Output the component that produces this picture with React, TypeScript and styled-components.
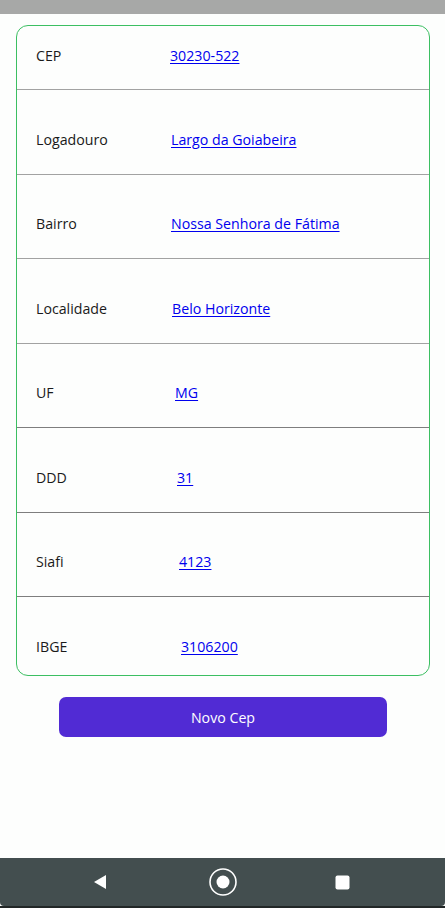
import React from "react";
import styled, { createGlobalStyle } from "styled-components";

const Global = createGlobalStyle`
  html, body { margin: 0; padding: 0; background: #fdfefd; }
  body { font-family: "Open Sans", "Noto Sans", sans-serif; }
`;

const Screen = styled.div`
  width: 445px;
  height: 908px;
  display: flex;
  flex-direction: column;
  background: #fdfefd;
  overflow: hidden;
`;

const StatusBar = styled.div`
  height: 14px;
  background: #a7a8a7;
  flex-shrink: 0;
`;

const Content = styled.div`
  flex: 1;
  display: flex;
  flex-direction: column;
  padding: 11px 15px 0 16px;
`;

const Card = styled.div`
  border: 1px solid #3cbf62;
  border-radius: 12px;
  display: flex;
  flex-direction: column;
  overflow: hidden;
`;

const Row = styled.div<{ $first?: boolean; $last?: boolean; $dark?: boolean }>`
  display: flex;
  align-items: center;
  height: 20px;
  padding: ${(p) => (p.$first ? "19px 0 24px" : p.$last ? "39px 0 19px" : "39px 0 24.5px")};
  border-bottom: ${(p) => (p.$last ? "none" : `1px solid ${p.$dark ? "#7e7e7e" : "#a2a2a2"}`)};
`;

const Label = styled.span`
  width: 134px;
  padding-left: 19px;
  font-size: 14.2px;
  color: #1a1a1a;
  flex-shrink: 0;
`;

const Value = styled.a<{ $indent: number }>`
  margin-left: ${(p) => p.$indent}px;
  font-size: 14.2px;
  color: #0000ee;
  text-decoration: underline;
  text-underline-offset: 2px;
`;

const ButtonWrap = styled.div`
  display: flex;
  justify-content: center;
  padding-top: 21px;
`;

const Button = styled.button`
  width: 328px;
  height: 40px;
  border: none;
  border-radius: 7px;
  background: #512bd4;
  color: #ffffff;
  font-family: "Open Sans", "Noto Sans", sans-serif;
  font-size: 14.2px;
`;

const NavBar = styled.div`
  height: 48px;
  background: #434e4f;
  display: flex;
  align-items: center;
  justify-content: center;
  flex-shrink: 0;
  border-radius: 0 0 4px 4px;
`;

const NavBottom = styled.div`
  height: 2px;
  background: #222727;
  flex-shrink: 0;
`;

const NavSlot = styled.div<{ $shift?: number }>`
  width: 120px;
  display: flex;
  justify-content: center;
  align-items: center;
  height: 48px;
  padding-right: ${(p) => p.$shift || 0}px;
  box-sizing: border-box;
`;

const rows = [
  { label: "CEP", value: "30230-522", indent: 0 },
  { label: "Logadouro", value: "Largo da Goiabeira", indent: 1 },
  { label: "Bairro", value: "Nossa Senhora de Fátima", indent: 1 },
  { label: "Localidade", value: "Belo Horizonte", indent: 2 },
  { label: "UF", value: "MG", indent: 5 },
  { label: "DDD", value: "31", indent: 7 },
  { label: "Siafi", value: "4123", indent: 9 },
  { label: "IBGE", value: "3106200", indent: 11 },
];

export default function App() {
  return (
    <Screen>
      <Global />
      <StatusBar />
      <Content>
        <Card>
          {rows.map((r, i) => (
            <Row key={r.label} $first={i === 0} $last={i === rows.length - 1} $dark={i >= 4}>
              <Label>{r.label}</Label>
              <Value href="#" $indent={r.indent}>{r.value}</Value>
            </Row>
          ))}
        </Card>
        <ButtonWrap>
          <Button>Novo Cep</Button>
        </ButtonWrap>
      </Content>
      <NavBar>
        <NavSlot $shift={5}>
          <svg width="16" height="16" viewBox="0 0 16 16">
            <path d="M14 1 L14 15 L2 8 Z" fill="#ffffff" />
          </svg>
        </NavSlot>
        <NavSlot>
          <svg width="30" height="30" viewBox="0 0 30 30">
            <circle cx="15" cy="15" r="13" fill="none" stroke="#ffffff" strokeWidth="1.6" />
            <circle cx="15" cy="15" r="6.5" fill="#ffffff" />
          </svg>
        </NavSlot>
        <NavSlot>
          <svg width="15" height="15" viewBox="0 0 15 15">
            <rect x="0.5" y="0.5" width="14" height="14" rx="2" fill="#ffffff" />
          </svg>
        </NavSlot>
      </NavBar>
      <NavBottom />
    </Screen>
  );
}
